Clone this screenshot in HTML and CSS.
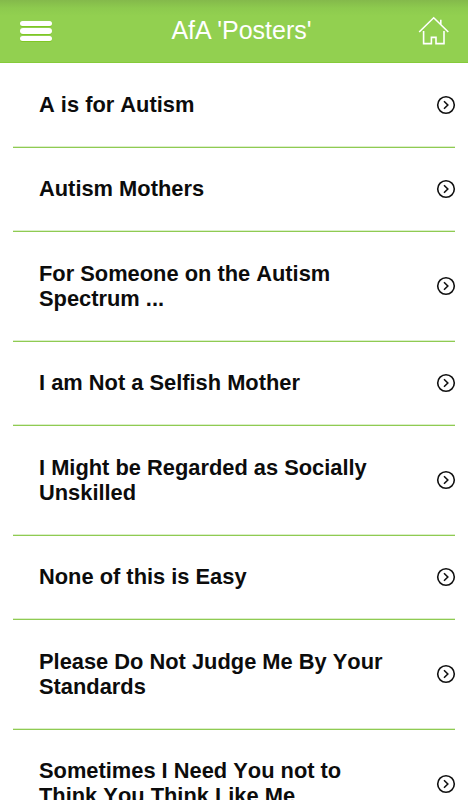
FILE: index.html
```html
<!DOCTYPE html>
<html lang="en">
<head>
  <meta charset="UTF-8">
  <meta name="viewport" content="width=device-width, initial-scale=1.0">
  <title>AfA 'Posters'</title>
  <link rel="stylesheet" href="styles.css">
</head>
<body>

  <header class="header">
    <button class="menu-btn" aria-label="Menu"><span></span><span></span><span></span></button>
    <h1>AfA 'Posters'</h1>
    <a class="home" href="#" aria-label="Home">
      <svg width="32" height="30" viewBox="0 0 32 30">
        <path d="M1.2 16 15.7 1.8 30.3 16M22.8 8.5V3.8M5.6 15v12.6h7.8v-6.2h4.6v6.2h8V15"/>
      </svg>
    </a>
  </header>

  <svg width="0" height="0" class="defs">
    <symbol id="arrow" viewBox="0 0 20 20">
      <circle cx="10" cy="10" r="8.3"/>
      <path d="M8 6.3 11.8 10 8 13.7"/>
    </symbol>
  </svg>

  <ul class="list">
    <li><a href="#">A is for Autism</a><svg class="arrow"><use href="#arrow"/></svg></li>
    <li><a href="#">Autism Mothers</a><svg class="arrow"><use href="#arrow"/></svg></li>
    <li><a href="#">For Someone on the Autism Spectrum ...</a><svg class="arrow"><use href="#arrow"/></svg></li>
    <li><a href="#">I am Not a Selfish Mother</a><svg class="arrow"><use href="#arrow"/></svg></li>
    <li><a href="#">I Might be Regarded as Socially Unskilled</a><svg class="arrow"><use href="#arrow"/></svg></li>
    <li><a href="#">None of this is Easy</a><svg class="arrow"><use href="#arrow"/></svg></li>
    <li><a href="#">Please Do Not Judge Me By Your Standards</a><svg class="arrow"><use href="#arrow"/></svg></li>
    <li><a href="#">Sometimes I Need You not to Think You Think Like Me</a><svg class="arrow"><use href="#arrow"/></svg></li>
  </ul>

</body>
</html>
```
FILE: styles.css
```css
* { box-sizing: border-box; }
body {
  margin: 0;
  height: 100vh; overflow: hidden;
  background: #fff; color: #0c0c0c;
  font-family: "Liberation Sans", Arial, sans-serif;
}
.header {
  display: flex; align-items: center;
  height: 63px; padding: 0 18px 0 20px;
  background: linear-gradient(#84b94b, #8dca4e 8px, #92d050 16px);
  border-bottom: 1px solid #85cb3a;
}
.header h1 {
  flex: 1;
  margin: 0 0 1px; padding-left: 13px;
  font-size: 25px; font-weight: normal; color: #fff;
  text-align: center;
}
.menu-btn {
  display: flex; flex-direction: column; gap: 2.5px;
  width: 32px; padding: 0;
  background: none; border: none;
}
.menu-btn span {
  height: 5.3px; border-radius: 3px;
  background: #fff;
  box-shadow: 0 1px 0 #7fc724;
}
.home { display: block; height: 30px; }
.home svg {
  display: block; fill: none;
  stroke: #fff; stroke-width: 1.6;
}
.defs { display: none; }
.list {
  list-style: none;
  margin: 0; padding: .4px 13px 0;
}
.list li {
  display: flex; align-items: center;
  justify-content: space-between;
  padding: 28.5px 0 30px 26px;
  border-bottom: 1px solid #8fcb52;
  box-shadow: inset 0 -1px #dcefca;
}
.list a {
  width: 350px;
  font-size: 21.85px; font-weight: bold; line-height: 25px;
  font-kerning: none;
  color: inherit; text-decoration: none;
}
.arrow {
  width: 20px; height: 20px; margin: .4px -1px 0 0;
  fill: none; stroke: #111; stroke-width: 1.6;
}
```
